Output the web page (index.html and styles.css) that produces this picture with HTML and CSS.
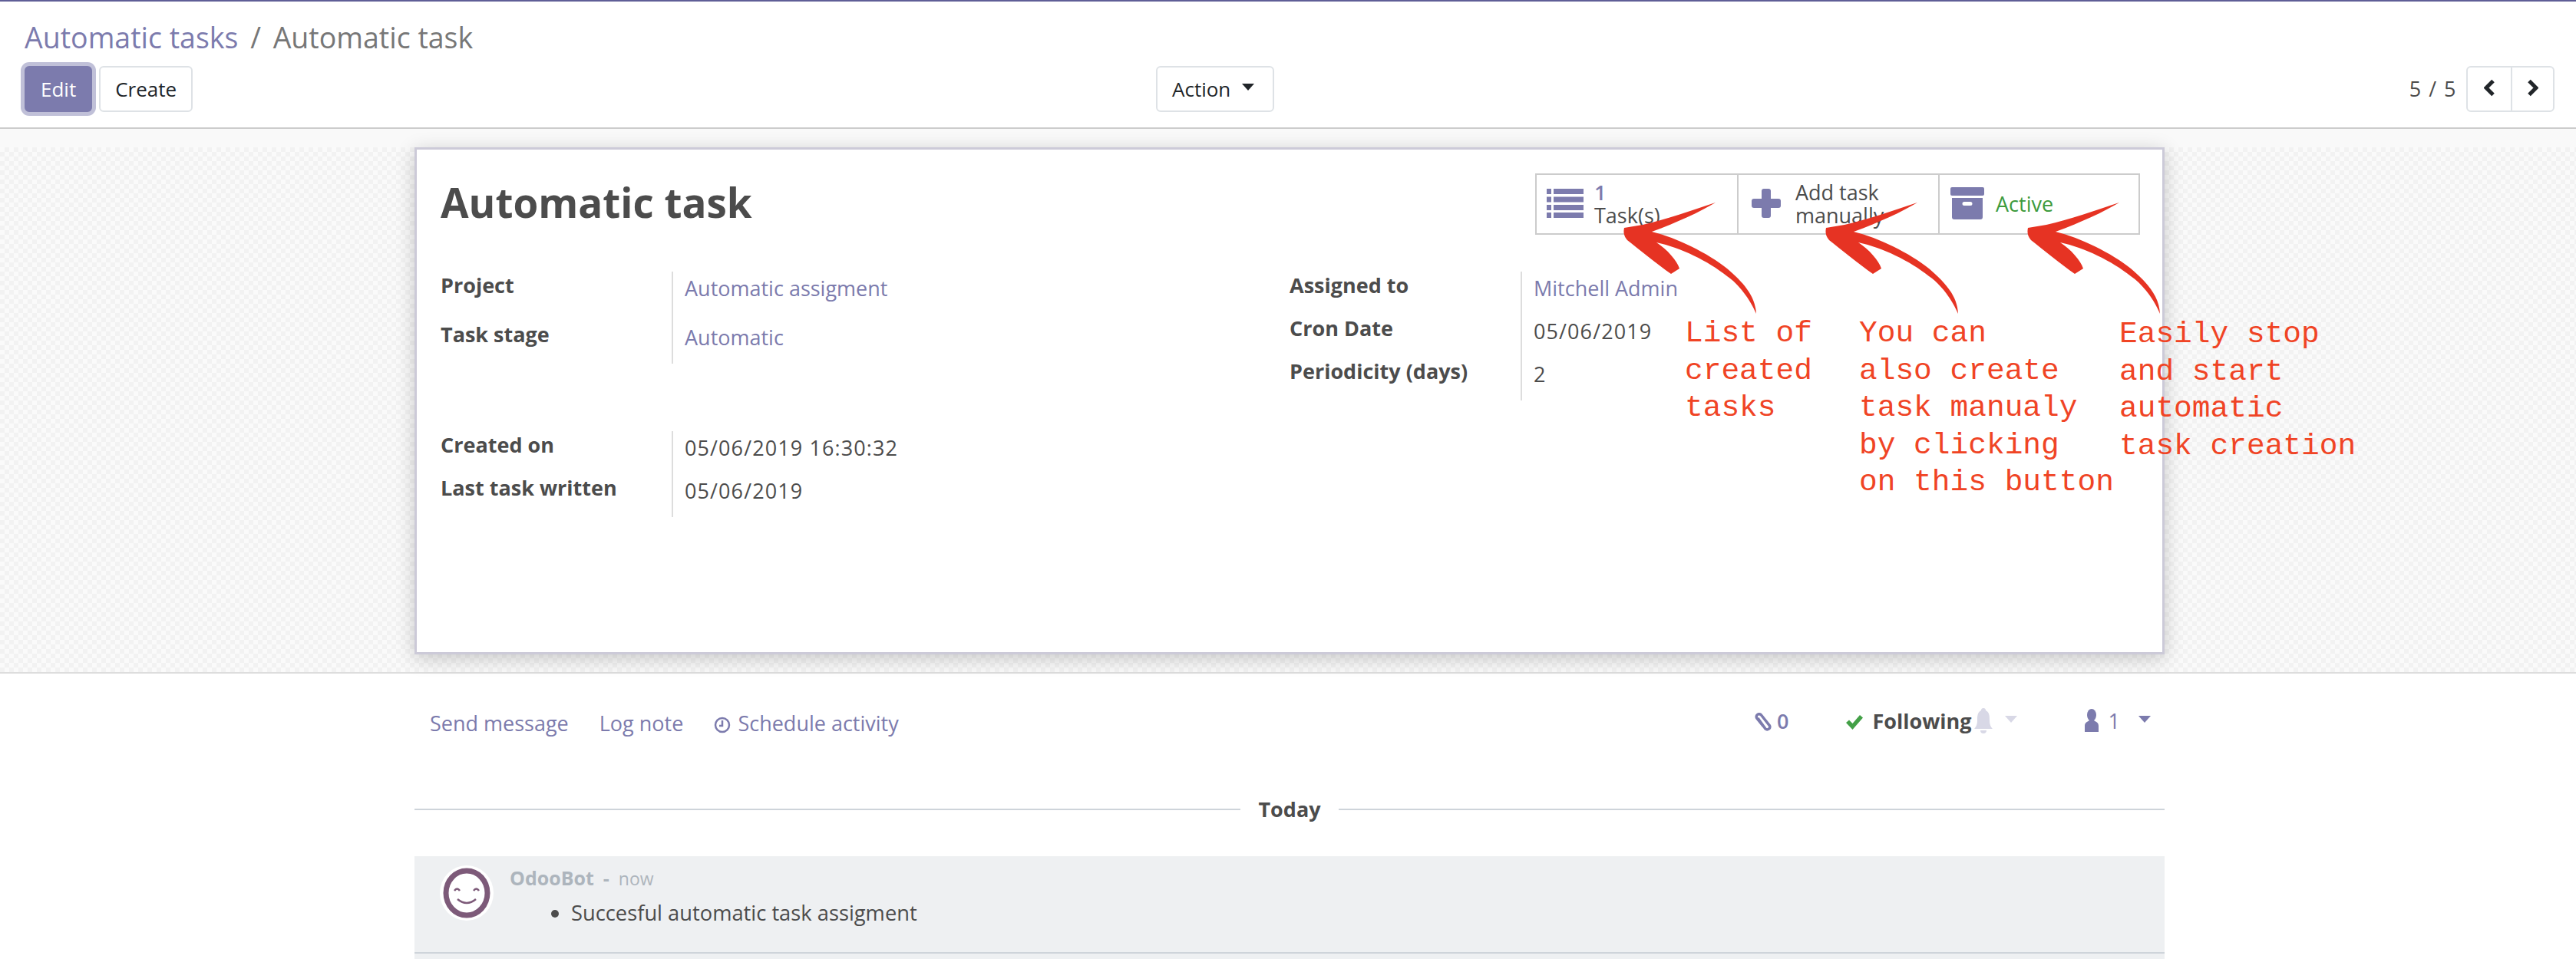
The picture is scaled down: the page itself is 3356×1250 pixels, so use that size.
FILE: index.html
```html
<!DOCTYPE html>
<html lang="en">
<head>
  <meta charset="UTF-8" />
  <title>Automatic task</title>
  <link rel="stylesheet" href="styles.css">
</head>
<body>

<svg class="defs" width="0" height="0">
  <symbol id="redArrow" viewBox="0 0 220 170">
    <path d="M16 47 L40 43 C70 36 105 24 135 14 C115 26 85 40 52 52 C85 60 125 80 150 100 C170 117 187 135 188 159 C180 140 165 120 150 110 C125 90 90 73 58 66 C72 75 85 90 88 100 L77 107 C60 95 35 75 20 63 C15 57 15 52 16 47 Z" />
  </symbol>
</svg>

<header class="control-panel">
  <div class="breadcrumb">
    <a class="link">Automatic tasks</a>
    <span class="crumb-sep">/</span>
    <span>Automatic task</span>
  </div>
  <div class="cp-row">
    <div class="cp-left">
      <button class="btn btn-primary">Edit</button>
      <button class="btn">Create</button>
    </div>
    <button class="btn btn-action">Action <i class="caret"></i></button>
    <div class="pager">
      <span class="pager-value">5 / 5</span>
      <div class="pager-btns">
        <button class="pager-btn">
          <svg width="15" height="23" viewBox="0 0 15 23"><polyline points="12,2.5 3,11.5 12,20.5" /></svg>
        </button>
        <button class="pager-btn">
          <svg width="15" height="23" viewBox="0 0 15 23"><polyline points="3,2.5 12,11.5 3,20.5" /></svg>
        </button>
      </div>
    </div>
  </div>
</header>

<main class="form-view">
  <div class="form-canvas">
    <section class="sheet">
      <div class="sheet-head">
        <h1 class="sheet-title">Automatic task</h1>
        <div class="button-box">
          <div class="stat-btn">
            <svg class="stat-icon" width="48" height="38" viewBox="0 0 48 38">
              <rect x="0" y="0" width="6" height="7" /><rect x="9" y="0" width="39" height="7" />
              <rect x="0" y="10.5" width="6" height="7" /><rect x="9" y="10.5" width="39" height="7" />
              <rect x="0" y="21" width="6" height="7" /><rect x="9" y="21" width="39" height="7" />
              <rect x="0" y="31" width="6" height="7" /><rect x="9" y="31" width="39" height="7" />
            </svg>
            <div class="stat-text"><span class="link stat-count">1</span><br>Task(s)</div>
          </div>
          <div class="stat-btn">
            <svg class="stat-icon" width="38" height="38" viewBox="0 0 38 38">
              <rect x="13" y="0" width="12" height="38" rx="3" /><rect x="0" y="13" width="38" height="12" rx="3" />
            </svg>
            <div class="stat-text stat-text-add">Add task<br>manually</div>
          </div>
          <div class="stat-btn">
            <svg class="stat-icon" width="44" height="42" viewBox="0 0 44 42">
              <rect x="0" y="0" width="44" height="11" rx="2" />
              <path d="M2 14 H42 V39 a3 3 0 0 1 -3 3 H5 a3 3 0 0 1 -3 -3 Z M18 19 a1.500 1.500 0 0 0 0 5 H26 a1.500 1.500 0 0 0 0 -5 Z" fill-rule="evenodd" />
            </svg>
            <div class="stat-active">Active</div>
          </div>
        </div>
      </div>

      <div class="sheet-groups">
        <div class="sheet-col">
          <div class="field-group">
            <div class="field-row field-row-tall">
              <div class="field-label">Project</div>
              <div class="field-value link">Automatic assigment</div>
            </div>
            <div class="field-row">
              <div class="field-label">Task stage</div>
              <div class="field-value link">Automatic</div>
            </div>
          </div>
          <div class="field-group field-group-second">
            <div class="field-row">
              <div class="field-label">Created on</div>
              <div class="field-value field-date">05/06/2019 16:30:32</div>
            </div>
            <div class="field-row">
              <div class="field-label">Last task written</div>
              <div class="field-value field-date">05/06/2019</div>
            </div>
          </div>
        </div>
        <div class="sheet-col">
          <div class="field-group">
            <div class="field-row">
              <div class="field-label">Assigned to</div>
              <div class="field-value link">Mitchell Admin</div>
            </div>
            <div class="field-row">
              <div class="field-label">Cron Date</div>
              <div class="field-value field-date">05/06/2019</div>
            </div>
            <div class="field-row">
              <div class="field-label">Periodicity (days)</div>
              <div class="field-value">2</div>
            </div>
          </div>
        </div>
      </div>
    </section>
  </div>
</main>

<section class="chatter">
  <div class="chatter-bar">
    <div class="chatter-actions">
      <a class="link">Send message</a>
      <a class="link">Log note</a>
      <a class="link schedule">
        <svg width="22" height="22" viewBox="0 0 22 22"><circle cx="11" cy="11" r="9" /><polyline points="11,5 11,12 7,12" /></svg>
        Schedule activity
      </a>
    </div>
    <div class="chatter-topics">
      <span class="link topic-attach">
        <svg width="22" height="24" viewBox="0 0 22 24"><path d="M4 7 L14 21 A3.500 3.500 0 0 0 19.500 17 L8.500 3 A3.500 3.500 0 0 0 3 7.500 L11.500 18" /></svg>
        0
      </span>
      <span class="topic-follow">
        <svg width="24" height="22" viewBox="0 0 24 22"><path d="M1 12 L5 8.500 L9.500 13 L19 2 L23 5.500 L9.500 21 Z" /></svg>
        Following
      </span>
      <svg class="topic-bell" width="24" height="34" viewBox="0 0 24 34"><path d="M12 0 a3 3 0 0 1 3 3 C20 5 20 11 20 16 C20 22 22 25 24 27 H0 C2 25 4 22 4 16 C4 11 4 5 9 3 a3 3 0 0 1 3 -3 Z M8 29 H16 a4 4 0 0 1 -8 0 Z" /></svg>
      <i class="caret caret-pale"></i>
      <span class="link topic-users">
        <svg width="18" height="30" viewBox="0 0 18 30"><ellipse cx="9" cy="8" rx="6" ry="8" /><path d="M0 30 V22 C0 18 3 17 6 15 H12 C15 17 18 18 18 22 V30 Z" /></svg>
        1
      </span>
      <i class="caret caret-link"></i>
    </div>
  </div>

  <div class="today"><span>Today</span></div>

  <div class="thread">
    <div class="message">
      <svg class="avatar" width="70" height="72" viewBox="0 0 70 72">
        <ellipse cx="35" cy="36" rx="35" ry="36" fill="#fff" />
        <ellipse cx="35" cy="36" rx="27" ry="29" fill="#fff" stroke="#7d5a79" stroke-width="7" />
        <path d="M19 33 q3.500 -5 7 0 M44 33 q3.500 -5 7 0 M23 44 q12 10 24 0" fill="none" stroke="#7d5a79" stroke-width="2.500" />
      </svg>
      <div class="message-body">
        <div class="message-author"><b>OdooBot</b><b class="message-dash">-</b><small>now</small></div>
        <ul class="message-text">
          <li>Succesful automatic task assigment</li>
        </ul>
      </div>
    </div>
  </div>
</section>

<svg class="red-arrow arrow-1"><use href="#redArrow" /></svg>
<svg class="red-arrow arrow-2"><use href="#redArrow" /></svg>
<svg class="red-arrow arrow-3"><use href="#redArrow" /></svg>

<div class="note note-1">List of<br>created<br>tasks</div>
<div class="note note-2">You can<br>also create<br>task manualy<br>by clicking<br>on this button</div>
<div class="note note-3">Easily stop<br>and start<br>automatic<br>task creation</div>

</body>
</html>
```

FILE: styles.css
```css
* {
  box-sizing: border-box;
}

body {
  position: relative;
  margin: 0;
  width: 3356px;
  height: 1250px;
  overflow: hidden;
  background: #fff;
  border-top: 2px solid #5f5e97;
  font-family: "Open Sans", "Noto Sans", sans-serif;
  font-size: 27px;
  line-height: 36px;
  color: #4c4c4c;
}

.defs {
  position: absolute;
}

.link {
  color: #7c7bad;
}

/* control panel */
.control-panel {
  height: 166px;
  padding: 0 28px 0 32px;
  border-bottom: 2px solid #ccc;
}

.breadcrumb {
  height: 84px;
  padding-top: 22px;
  font-size: 37.500px;
  line-height: 50px;
  color: #777;
}

.crumb-sep {
  margin: 0 6px;
}

.cp-row {
  display: flex;
  height: 60px;
}

.cp-left {
  display: flex;
  gap: 9px;
  width: 1474px;
}

.btn {
  height: 60px;
  padding: 0 19px;
  background: #fff;
  border: 2px solid #dee2e6;
  border-radius: 6px;
  font: inherit;
  font-size: 26px;
  color: #212529;
}

.btn-primary {
  background: #7c7bad;
  border-color: #7c7bad;
  color: #fff;
  box-shadow: 0 0 0 5px #c0c0d8;
}

.btn-action {
  display: flex;
  align-items: center;
  width: 154px;
}

.caret {
  display: inline-block;
  width: 0;
  height: 0;
  margin-left: 15px;
  margin-bottom: 6px;
  border-top: 9px solid #212529;
  border-left: 8px solid transparent;
  border-right: 8px solid transparent;
}

.pager {
  display: flex;
  align-items: center;
  gap: 12px;
  margin-left: auto;
}

.pager-value {
  letter-spacing: 1.500px;
}

.pager-btns {
  display: flex;
  height: 60px;
  border: 2px solid #dee2e6;
  border-radius: 6px;
}

.pager-btn {
  width: 56px;
  padding: 0;
  background: #fff;
  border: 0;
  border-radius: 6px;
}

.pager-btn + .pager-btn {
  width: 55px;
  border-left: 2px solid #dee2e6;
  border-radius: 0 6px 6px 0;
}

.pager-btn polyline {
  fill: none;
  stroke: #212529;
  stroke-width: 5;
}

/* form */
.form-view {
  padding-top: 24px;
  background: #f9f9f9;
}

.form-canvas {
  height: 686px;
  padding-left: 540px;
  border-bottom: 2px solid #ddd;
  background-color: #fafafa;
  background-image: conic-gradient(#f2f2f2 25%, transparent 0 50%, #f2f2f2 0 75%, transparent 0);
  background-size: 12px 12px;
}

.sheet {
  position: relative;
  width: 2280px;
  height: 661px;
  padding: 31px 29px 0 31px;
  background: #fff;
  border: 3px solid #cccad8;
  box-shadow: 0 5px 24px rgba(0, 0, 0, 0.2);
}

.sheet-head {
  display: flex;
  justify-content: space-between;
  height: 128px;
}

.sheet-title {
  margin: 0;
  padding-top: 3px;
  font-size: 53px;
  line-height: 70px;
  font-weight: 700;
  color: #4c4c4c;
}

.button-box {
  display: flex;
  height: 80px;
  border: 2px solid #ccc;
}

.stat-btn {
  display: flex;
  align-items: center;
  width: 262px;
  padding-left: 17px;
  border-left: 2px solid #ccc;
  color: #4c4c4c;
}

.stat-btn:first-child {
  width: 261px;
  padding-left: 13px;
  border-left: 0;
}

.stat-btn:last-child {
  width: 261px;
  padding-left: 14px;
}

.stat-icon {
  flex: none;
  margin-top: -2px;
  fill: #7c7bad;
}

.stat-text {
  margin-left: 14px;
  line-height: 30px;
}

.stat-count {
  font-weight: 600;
}

.stat-text-add {
  margin-left: 19px;
}

.stat-active {
  margin-left: 15px;
  color: #3d9b3d;
}

.sheet-groups {
  display: grid;
  grid-template-columns: 1106px 1fr;
}

.field-group-second {
  margin-top: 88px;
}

.field-row {
  display: grid;
  grid-template-columns: 301px 1fr;
  height: 56px;
}

.field-row-tall {
  height: 64px;
}

.field-label {
  font-weight: 700;
}

.field-value {
  padding: 4px 0 0 15px;
  border-left: 2px solid #ddd;
  white-space: nowrap;
}

.field-date {
  letter-spacing: 1.100px;
}

/* chatter */
.chatter {
  position: relative;
  width: 2280px;
  margin-left: 540px;
}

.chatter-bar {
  display: flex;
  align-items: center;
  justify-content: space-between;
  height: 124px;
  padding: 0 18px 0 20px;
}

.chatter-actions {
  display: flex;
  gap: 40px;
  padding-top: 6px;
}

.schedule svg {
  margin-right: 2px;
  vertical-align: -3px;
  fill: none;
  stroke: #7c7bad;
  stroke-width: 2.500;
}

.chatter-topics {
  display: flex;
  align-items: center;
}

.topic-attach {
  font-weight: 600;
}

.topic-attach svg {
  vertical-align: -3px;
  fill: none;
  stroke: #7c7bad;
  stroke-width: 3.500;
}

.topic-follow {
  margin-left: 74px;
  font-weight: 700;
}

.topic-follow svg {
  vertical-align: -2px;
  margin-right: 4px;
  fill: #43a047;
}

.topic-bell {
  margin-left: 3px;
  fill: #d8d8e6;
}

.caret-pale {
  margin-left: 16px;
  border-top-color: #d8d8e6;
}

.topic-users {
  margin-left: 88px;
}

.topic-users svg {
  margin-right: 6px;
  vertical-align: -4px;
  fill: #7c7bad;
}

.caret-link {
  margin-left: 24px;
  border-top-color: #7c7bad;
}

.today {
  display: flex;
  align-items: center;
  gap: 23px;
  height: 36px;
  margin-top: 35px;
  font-weight: 700;
}

.today::before, .today::after {
  content: "";
  flex: 1;
  height: 2px;
  background: #ced4da;
}

.thread {
  height: 134px;
  margin-top: 43px;
  background: #eef0f2;
}

.message {
  display: flex;
  gap: 21px;
  height: 127px;
  padding: 12px 0 0 33px;
  border-bottom: 2px solid #ced4da;
}

.avatar {
  flex: none;
}

.message-author {
  margin-top: -2px;
  font-size: 25px;
  color: #adb5bd;
}

.message-dash {
  margin: 0 12px;
}

.message-author small {
  font-size: 23px;
}

.message-text {
  margin: 9px 0 0;
  padding-left: 80px;
  font-size: 27.300px;
  color: #4c4c4c;
}

/* annotations drawn over the screenshot */
.red-arrow {
  position: absolute;
  top: 248px;
  width: 220px;
  height: 170px;
  fill: #e63323;
}

.arrow-1 { left: 2100px; }
.arrow-2 { left: 2363px; }
.arrow-3 { left: 2626px; }

.note {
  position: absolute;
  font-family: "Liberation Mono", monospace;
  font-size: 39.500px;
  line-height: 48.500px;
  color: #f04425;
  white-space: nowrap;
}

.note-1 { left: 2195px; top: 409px; }
.note-2 { left: 2422px; top: 409px; }
.note-3 { left: 2761px; top: 410px; }
```
